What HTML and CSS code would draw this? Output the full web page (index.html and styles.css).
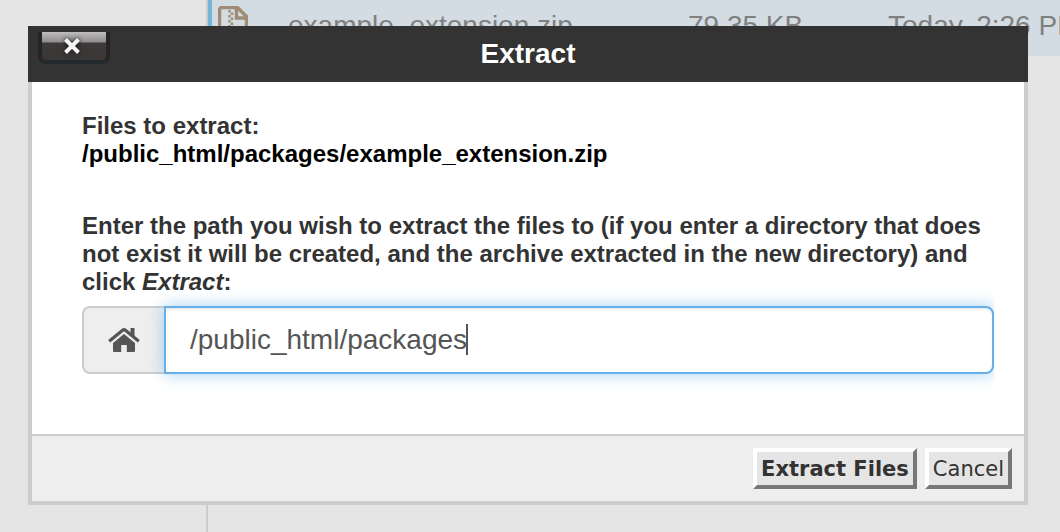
FILE: index.html
```html
<!DOCTYPE html>
<html lang="en">
  <head>
    <meta charset="utf-8">
    <meta name="viewport" content="width=device-width, initial-scale=1">
    <title>Extract</title>
    <link rel="stylesheet" href="styles.css">
  </head>
<body>
  <div class="filemanager">
    <div class="sidebar"></div>
    <div class="filelist">
      <div class="filerow">
        <svg class="zipicon" viewBox="0 0 30 40" aria-hidden="true">
          <path d="M4 1.500h15.500l9 9V37a1.500 1.500 0 0 1-1.500 1.500H3A1.500 1.500 0 0 1 1.500 37V4A2.500 2.500 0 0 1 4 1.500z" fill="none" stroke="#a08c76" stroke-width="3.500"/>
          <path d="M18.500 2v10H29" fill="none" stroke="#a08c76" stroke-width="3.500"/>
          <path d="M11.500 4v24" stroke="#a08c76" stroke-width="2.500" stroke-dasharray="2.500 2.500"/>
          <path d="M14 6.500v22" stroke="#a08c76" stroke-width="2.500" stroke-dasharray="2.500 2.500"/>
        </svg>
        <span class="filename">example_extension.zip</span>
        <span class="filesize">79.35 KB</span>
        <span class="filedate">Today, 2:26 PM</span>
      </div>
    </div>
  </div>

  <div class="dialog" role="dialog" aria-labelledby="dialogtitle">
    <div class="dialogheader">
      <button class="closebutton" type="button" aria-label="Close">
        <svg class="closeicon" viewBox="0 0 18 18" aria-hidden="true">
          <path d="M2.500 2.500l13 13M15.500 2.500l-13 13" stroke="#f4f4f4" stroke-width="4"/>
        </svg>
      </button>
      <h1 class="dialogtitle" id="dialogtitle">Extract</h1>
    </div>

    <form class="extractform">
      <div class="dialogbody">
        <p class="files">Files to extract:<br><span class="filepath">/public_html/packages/example_extension.zip</span></p>
        <label class="pathlabel" for="path">Enter the path you wish to extract the files to (if you enter a directory that does not exist it will be created, and the archive extracted in the new directory) and click <em>Extract</em>:</label>
        <div class="inputgroup">
          <span class="addon">
            <svg class="homeicon" viewBox="0 0 32 26" aria-hidden="true">
              <path d="M16 7L5 16V24a1 1 0 0 0 1 1h7.200v-7h5.600v7H26a1 1 0 0 0 1-1v-8z" fill="#555"/>
              <path d="M1.200 14.200L14.600 3.200q1.400-1.100 2.800 0L30.800 14.200" fill="none" stroke="#555" stroke-width="3.200"/>
              <path d="M22.500 1h4v10l-4-3.500z" fill="#555"/>
            </svg>
          </span>
          <div class="pathbox">
            <input class="pathinput" id="path" type="text" value="/public_html/packages" spellcheck="false">
            <span class="caret"></span>
          </div>
        </div>
      </div>

      <div class="dialogfooter">
        <button class="button primary" type="button">Extract Files</button>
        <button class="button" type="button">Cancel</button>
      </div>
    </form>
  </div>
</body>
</html>
```
FILE: styles.css
```css
* {
  box-sizing: border-box;
}

body, html {
  margin: 0;
  height: 100%;
  overflow: hidden;
}

body {
  background-color: #e5e5e5;
  color: #333;
  font-family: "Liberation Sans", Arial, sans-serif;
  font-size: 24px;
  line-height: 28px;
}

.filemanager {
  display: flex;
  height: 100%;
}

.sidebar {
  flex: 0 0 208px;
  border-right: 2px solid #ccc;
}

.filelist {
  flex: 1;
  min-width: 0;
}

.filerow {
  display: grid;
  grid-template-columns: 76px 400px 200px 1fr;
  height: 56px;
  padding-top: 6px;
  border-left: 4px solid #76b5d6;
  background-color: #d2dce2;
  color: #808080;
  font-size: 28px;
  line-height: 40px;
  white-space: nowrap;
}

.zipicon {
  width: 30px;
  height: 40px;
  margin-left: 6px;
}

.dialog {
  position: absolute;
  top: 26px;
  left: 28px;
  right: 32px;
}

.dialogheader {
  display: grid;
  grid-template-columns: 1fr auto 1fr;
  height: 56px;
  padding: 6px 10px;
  background-color: #333;
}

.closebutton {
  width: 72px;
  height: 32px;
  padding: 0 4px 0 0;
  border: 4px solid #242424;
  border-top: 0;
  border-bottom-color: #222a2e;
  border-radius: 0 0 8px 8px;
  background: linear-gradient(#bebcbc, #8e8c8c 10px, #3e3a39 11px, #3a3635);
}

.closeicon {
  display: block;
  width: 18px;
  height: 18px;
  margin: 0 auto;
  filter: drop-shadow(0 0 2px #111);
}

.dialogtitle {
  margin: 0;
  color: #fff;
  font-size: 28px;
  line-height: 44px;
}

.extractform {
  border: 4px solid #ccc;
  border-top: 0;
}

.dialogbody {
  padding: 30px 30px 60px 50px;
  background-color: #fff;
  font-weight: bold;
}

.files {
  margin: 0 0 44px;
}

.filepath {
  color: #000;
}

.pathlabel {
  display: block;
  margin-bottom: 10px;
}

/* the glow stops at the right edge of the group */
.inputgroup {
  display: flex;
  height: 68px;
  clip-path: inset(-20px 0 -20px -20px);
}

.addon {
  display: flex;
  flex: 0 0 82px;
  align-items: center;
  justify-content: center;
  border: 2px solid #ccc;
  border-right: 0;
  border-radius: 8px 0 0 8px;
  background-color: #eee;
}

.homeicon {
  width: 32px;
  height: 26px;
}

.pathbox {
  position: relative;
  flex: 1;
}

.pathinput {
  width: 100%;
  height: 100%;
  padding: 0 24px;
  border: 2px solid #66afe9;
  border-radius: 0 8px 8px 0;
  outline: 0;
  background-color: #fff;
  box-shadow: inset 0 2px 2px rgba(0, 0, 0, 0.075), 0 0 16px rgba(102, 175, 233, 0.6);
  color: #555;
  font-family: inherit;
  font-size: 28px;
}

.caret {
  position: absolute;
  top: 18px;
  left: 302px;
  width: 2px;
  height: 31px;
  background-color: #555;
}

.dialogfooter {
  display: flex;
  justify-content: flex-end;
  gap: 8px;
  padding: 12px;
  border-top: 2px solid #ccc;
  background-color: #eee;
}

.button {
  padding: 2px 4px 0;
  border: 4px solid;
  border-color: #fff #777 #777 #fff;
  background-color: #e5e5e5;
  color: #333;
  font-family: "DejaVu Sans", Verdana, sans-serif;
  font-size: 21px;
  line-height: 31px;
}

.primary {
  font-weight: bold;
}
```
